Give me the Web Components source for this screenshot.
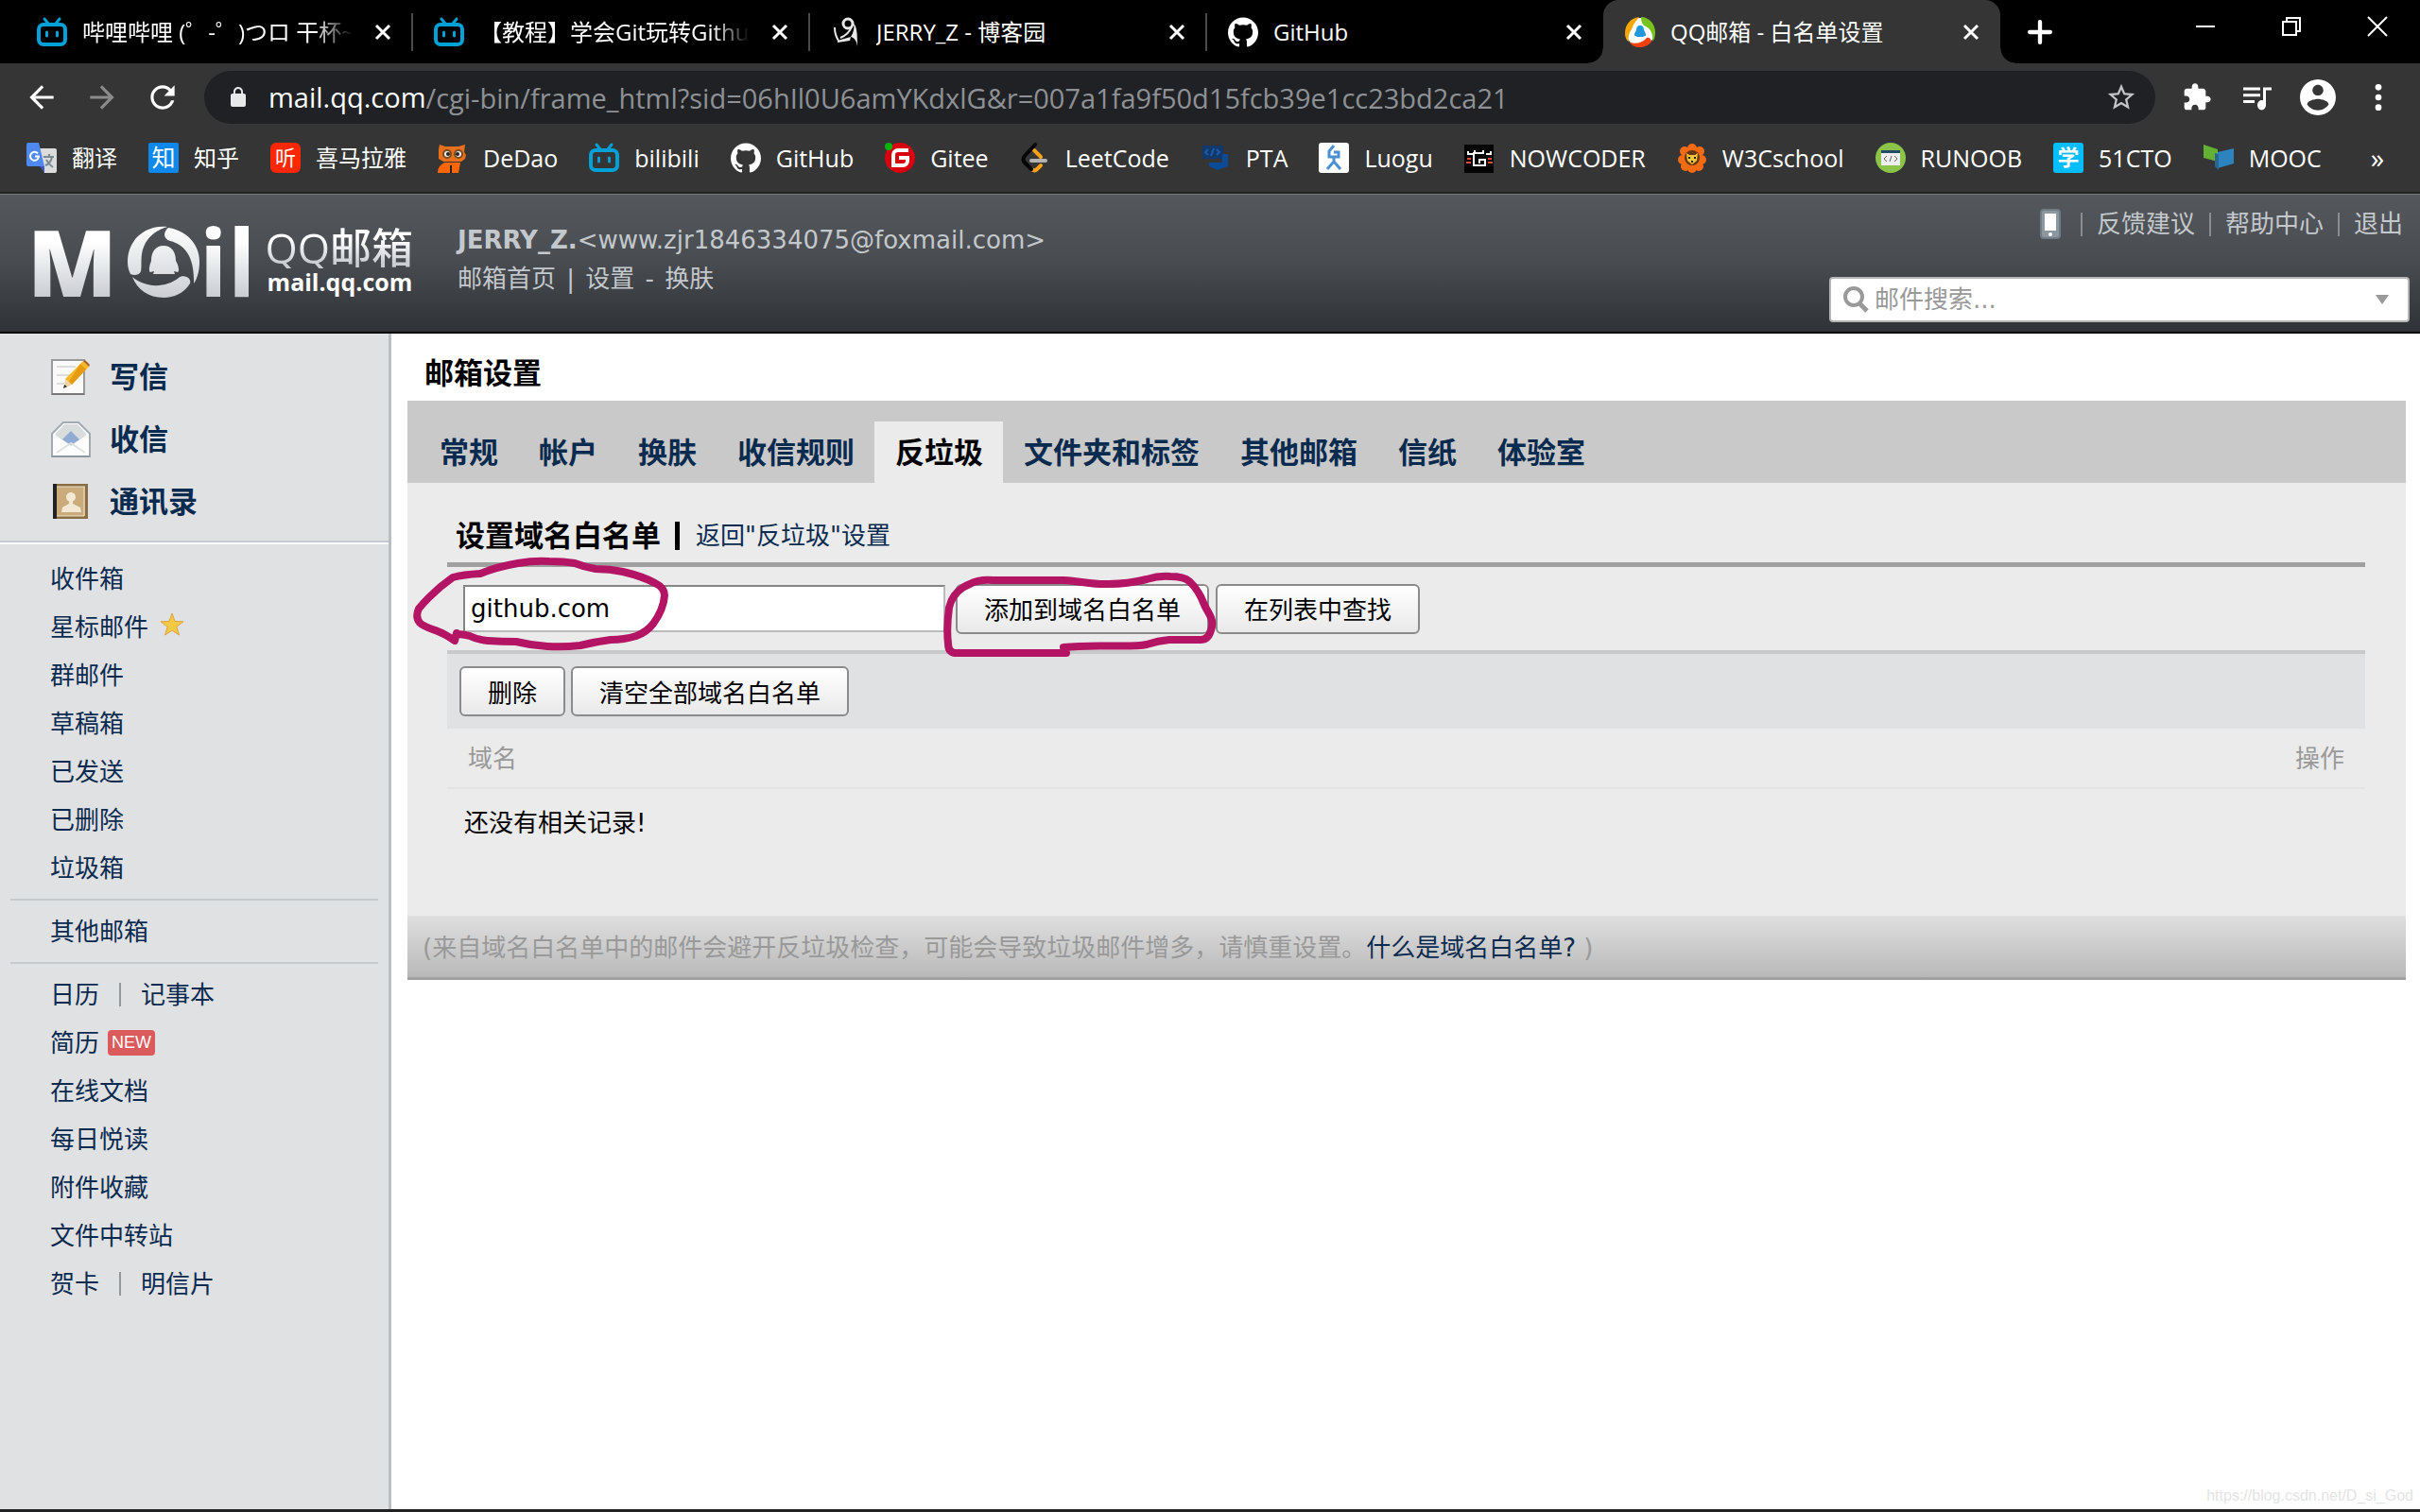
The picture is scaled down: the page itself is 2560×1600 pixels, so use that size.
<!DOCTYPE html>
<html lang="zh-CN">
<head>
<meta charset="utf-8">
<title>QQ邮箱 - 白名单设置</title>
<style>
  html, body { margin: 0; height: 100%; }
  body {
    font-family: "DejaVu Sans", "Noto Sans CJK SC", sans-serif;
    font-size: 26px;
    line-height: 32px;
    color: #000;
    background: #fff;
  }
</style>
</head>
<body>
<app-window></app-window>

<script>
// ---------- icons ----------
const CAT = 'M12 .297c-6.63 0-12 5.373-12 12 0 5.303 3.438 9.8 8.205 11.385.6.113.82-.258.82-.577 0-.285-.01-1.04-.015-2.04-3.338.724-4.042-1.61-4.042-1.61C4.422 18.07 3.633 17.7 3.633 17.7c-1.087-.744.084-.729.084-.729 1.205.084 1.838 1.236 1.838 1.236 1.07 1.835 2.809 1.305 3.495.998.108-.776.417-1.305.76-1.605-2.665-.3-5.466-1.332-5.466-5.93 0-1.31.465-2.38 1.235-3.22-.135-.303-.54-1.523.105-3.176 0 0 1.005-.322 3.3 1.23.96-.267 1.98-.399 3-.405 1.02.006 2.04.138 3 .405 2.28-1.552 3.285-1.23 3.285-1.23.645 1.653.24 2.873.12 3.176.765.84 1.23 1.91 1.23 3.22 0 4.61-2.805 5.625-5.475 5.92.42.36.81 1.096.81 2.22 0 1.606-.015 2.896-.015 3.286 0 .315.21.69.825.57C20.565 22.092 24 17.592 24 12.297c0-6.627-5.373-12-12-12';

// name: [viewBox, markup]
const ICONS = {
  bilibili: ['0 0 32 32', `<g fill="none" stroke="#00a1d6" stroke-linecap="round"><rect x="2" y="8" width="28" height="21" rx="5" stroke-width="4"/><path d="M8 2l4 5M24 2l-4 5" stroke-width="3"/><path d="M10.500 16v4M21.500 16v4" stroke-width="3"/></g>`],
  cnblogs: ['0 0 32 32', `<g fill="none" stroke="#e8e8e8"><circle cx="18" cy="7" r="5" stroke-width="3"/><path d="M4 11c0 7 2 11 4 14" stroke-width="2"/></g><path d="M7 25l14-4-1 4-13 2zM24 7c3 2 4 9 4 24-1-6-3-9-7-10 3-5 4-9 3-14z" fill="#e8e8e8"/><path d="M22 10c-2 6-5 9-12 12" fill="none" stroke="#e8e8e8" stroke-width="2"/>`],
  github: ['0 0 24 24', `<path fill="#fff" d="${CAT}"/>`],
  qqmail: ['0 0 32 32', `<circle cx="16" cy="16" r="15" fill="#fff"/><path d="M15 0C5 1 0 9 0 17c0 5 2 8 4 9-1-5 0-9 3-13C9 7 12 4 15 0z" fill="#f5a800"/><path d="M17 0c9 0 15 8 15 16 0 5-1 8-3 10 1-7-1-13-7-16-4-2-5-6-5-10z" fill="#79c21e"/><path d="M5 27c7 2 14 0 18-5 2-1 4 0 5 4-3 4-8 6-12 6-5 0-9-2-11-5z" fill="#f2400d"/><path d="M16 9c3 0 4 2 4 5 2 3 3 6 1 6l-2 1h-6l-2-1c-2 0-1-3 1-6 0-3 1-5 4-5z" fill="#2196dd"/>`],
  translate: ['0 0 32 32', `<path d="M14 6h16a2 2 0 0 1 2 2v22a2 2 0 0 1-2 2H19z" fill="#dcdcdc"/><path d="M2 0h11l6 25H2a2 2 0 0 1-2-2V2a2 2 0 0 1 2-2z" fill="#5089ee"/><path d="M14 25h5l0 7z" fill="#3a5bbd"/><path d="M12 11.500a4.500 4.500 0 1 0 1 3H9" fill="none" stroke="#fff" stroke-width="2"/><path d="M18 15h11M24 12v3M27 15c-1 5-4 8-7 9M21 18c2 4 4 6 7 8" stroke="#7b8b93" stroke-width="2" fill="none"/>`],
  zhihu: ['0 0 32 32', `<rect width="32" height="32" rx="2" fill="#0f88eb"/><text x="16" y="25" font-size="25" text-anchor="middle" fill="#fff">知</text>`],
  ximalaya: ['0 0 32 32', `<rect width="32" height="32" rx="6" fill="#fc2803"/><text x="16" y="24" font-size="22" text-anchor="middle" fill="#fff">听</text>`],
  dedao: ['0 0 32 32', `<path d="M2 2l6 2h14l7-2-1 8 2 3-1 4-4 3H6l-5-3V7z" fill="#e8701a"/><circle cx="10" cy="12" r="5" fill="#7a4a20"/><circle cx="22" cy="12" r="5" fill="#7a4a20"/><circle cx="10" cy="12" r="3" fill="#eee"/><circle cx="22" cy="12" r="3" fill="#eee"/><circle cx="11" cy="12" r="2" fill="#222"/><circle cx="21" cy="12" r="2" fill="#222"/><path d="M7 21h17l-2 11H0c0-5 2-8 7-11z" fill="#f60"/><path d="M14 24v8" stroke="#222" stroke-width="2"/>`],
  gitee: ['0 0 32 32', `<circle cx="16" cy="16" r="16" fill="#d8000f"/><path d="M25 8H14a5 5 0 0 0-5 5v11h10a5 5 0 0 0 5-5v-3h-9" fill="none" stroke="#fff" stroke-width="4"/><circle cx="4" cy="4" r="4" fill="#0ab30a"/>`],
  leetcode: ['0 0 32 32', `<g fill="none" stroke-width="4" stroke-linecap="round"><path d="M15 8l7 7M12 28q4 3 7-1l3-3" stroke="#ffa116"/><path d="M16 2L5 14q-3 4 0 7l7 7" stroke="#050505"/><path d="M12 19h15" stroke="#b3b3b3"/></g>`],
  pta: ['0 0 32 32', `<path d="M2 3h22v14H2z" fill="#12396b"/><path d="M8 7l-3 3 3 3M17 7l3 3-3 3M14 6l-3 8" stroke="#1d5ba8" stroke-width="2" fill="none"/><path d="M9 21h14V12h6v13l-11 4-9-4z" fill="#0b4a97"/>`],
  luogu: ['0 0 32 32', `<rect width="32" height="32" rx="3" fill="#fff"/><g fill="none" stroke="#4a90d2" stroke-width="3"><path d="M16 3l-5 6v6h10v-5h-5M16 15v5l-7 8M16 20l7 8"/></g>`],
  nowcoder: ['0 0 32 32', `<path d="M0 2h31v30H0z" fill="#050505"/><g fill="none" stroke="#fff" stroke-width="2"><path d="M4 9v3h5M28 9v3h-5M21 11H10v13h12v-6h-6v4M11 8v3M20 8v3"/></g><path d="M3 17h4M2 21h5M25 17h4M25 21h5" stroke="#e24d30" stroke-width="2"/>`],
  w3c: ['0 0 32 32', `<g fill="#f26b12"><circle cx="16" cy="6" r="5"/><circle cx="24" cy="9" r="5"/><circle cx="26" cy="18" r="5"/><circle cx="16" cy="27" r="5"/><circle cx="8" cy="9" r="5"/><circle cx="6" cy="18" r="5"/><circle cx="9" cy="25" r="5"/><circle cx="23" cy="25" r="5"/></g><circle cx="16" cy="16" r="8" fill="#6b3510"/><path d="M10 11l3 2h6l3-2-1 8-5 4-5-4z" fill="#efc63a"/><path d="M13 15v2M19 15v2M15 20h2" stroke="#222" stroke-width="2"/>`],
  runoob: ['0 0 32 32', `<circle cx="16" cy="16" r="16" fill="#8cc34b"/><path d="M6 8h20v16H6z" fill="#eee"/><path d="M6 8h20v3H6z" fill="#234a63"/><path d="M12 14l-3 3 3 3M20 14l3 3-3 3M17 14l-2 6" stroke="#666" stroke-width="1" fill="none"/>`],
  cto: ['0 0 32 32', `<rect width="32" height="32" rx="3" fill="#04bdfd"/><text x="16" y="24" font-size="23" font-weight="700" text-anchor="middle" fill="#fff">学</text>`],
  mooc: ['0 0 32 32', `<path d="M0 2l15 5v13L0 16z" fill="#62b132"/><path d="M15 10l17-4v16l-17 5z" fill="#2d83bd"/><path d="M12 11l4 1v17l-4-4z" fill="#2b6690"/>`],

  back: ['0 0 24 24', `<path fill="currentColor" d="M20 11H7.830l5.590-5.590L12 4l-8 8 8 8 1.410-1.410L7.830 13H20v-2z"/>`],
  forward: ['0 0 24 24', `<path fill="currentColor" d="M4 11h12.170l-5.590-5.590L12 4l8 8-8 8-1.410-1.410L16.170 13H4v-2z"/>`],
  reload: ['0 0 24 24', `<path fill="currentColor" d="M17.65 6.35C16.2 4.9 14.21 4 12 4c-4.42 0-7.99 3.58-7.99 8s3.57 8 7.99 8c3.73 0 6.84-2.55 7.73-6h-2.08c-.82 2.33-3.04 4-5.65 4-3.31 0-6-2.69-6-6s2.69-6 6-6c1.66 0 3.14.69 4.22 1.78L13 11h7V4l-2.35 2.35z"/>`],
  lock: ['0 0 24 24', `<path fill="currentColor" d="M18 8h-1V6c0-2.76-2.24-5-5-5S7 3.24 7 6v2H6c-1.1 0-2 .9-2 2v10c0 1.1.9 2 2 2h12c1.1 0 2-.9 2-2V10c0-1.1-.9-2-2-2zM8.900 6c0-1.710 1.390-3.100 3.100-3.100s3.100 1.390 3.100 3.100v2H8.900V6z"/>`],
  star: ['0 0 24 24', `<path fill="currentColor" d="M22 9.240l-7.190-.620L12 2 9.190 8.630 2 9.240l5.460 4.730L5.820 21 12 17.270 18.180 21l-1.630-7.030L22 9.240zM12 15.400l-3.760 2.270 1-4.280-3.320-2.880 4.380-.380L12 6.100l1.710 4.040 4.380.380-3.320 2.880 1 4.280L12 15.400z"/>`],
  puzzle: ['0 0 24 24', `<path fill="currentColor" d="M20.500 11H19V7c0-1.100-.900-2-2-2h-4V3.500C13 2.120 11.880 1 10.500 1S8 2.120 8 3.500V5H4c-1.100 0-1.990.900-1.990 2v3.800H3.500c1.490 0 2.700 1.210 2.700 2.700s-1.210 2.700-2.700 2.700H2V20c0 1.100.900 2 2 2h3.800v-1.500c0-1.490 1.210-2.700 2.700-2.700 1.490 0 2.700 1.210 2.700 2.700V22H17c1.100 0 2-.900 2-2v-4h1.500c1.380 0 2.500-1.120 2.500-2.500S21.880 11 20.500 11z"/>`],
  playlist: ['0 0 24 24', `<path fill="currentColor" d="M14 5H2v2h12V5zm0 4.500H2v2h12v-2zM2 16h8v-2H2v2zM16 5v9.180c-.310-.110-.650-.180-1-.180-1.660 0-3 1.600-3 3.400s1.340 3.600 3 3.600 3-1.600 3-3.600V7h4V5h-6z"/>`],
  account: ['2 2 20 20', `<path fill="currentColor" d="M12 2C6.480 2 2 6.480 2 12s4.480 10 10 10 10-4.480 10-10S17.520 2 12 2zm0 3c1.660 0 3 1.340 3 3s-1.340 3-3 3-3-1.340-3-3 1.340-3 3-3zm0 14.200c-2.500 0-4.710-1.280-6-3.220.030-1.990 4-3.080 6-3.080 1.990 0 5.970 1.090 6 3.080-1.290 1.940-3.500 3.220-6 3.220z"/>`],
  dots: ['0 0 24 24', `<g fill="currentColor"><circle cx="12" cy="4" r="2.500"/><circle cx="12" cy="12" r="2.500"/><circle cx="12" cy="20" r="2.500"/></g>`],
  close: ['0 0 20 20', `<path d="M3 3l14 14M17 3L3 17" stroke="currentColor" stroke-width="3" fill="none"/>`],
  plus: ['0 0 24 24', `<path d="M12 2v20M2 12h20" stroke="currentColor" stroke-width="4" stroke-linecap="round"/>`],
  minimize: ['0 0 20 20', `<path d="M0 10h20" stroke="currentColor" stroke-width="2"/>`],
  restore: ['0 0 20 20', `<path d="M1 5h14v14H1zM5 5V1h14v14h-4" stroke="currentColor" stroke-width="2" fill="none"/>`],
  shut: ['0 0 20 20', `<path d="M0 0l20 20M20 0L0 20" stroke="currentColor" stroke-width="2" fill="none"/>`],

  phone: ['0 0 22 32', `<rect x="1" y="1" width="20" height="30" rx="3" fill="#8d979f" stroke="#6f7c86" stroke-width="2"/><path d="M5 5h12v18H5z" fill="#fff"/><circle cx="11" cy="27" r="2" fill="#fff"/>`],
  search: ['0 0 28 28', `<circle cx="12" cy="11" r="9" fill="none" stroke="#999" stroke-width="4"/><path d="M18 18l8 8" stroke="#999" stroke-width="5"/>`],
  compose: ['0 0 42 40', `<path d="M1 2h34v36H1z" fill="#fafafa" stroke="#9a9a9a" stroke-width="2"/><path d="M6 9h20M6 18h16M6 27h8" stroke="#ddd" stroke-width="2"/><path d="M1 38h34" stroke="#777" stroke-width="2"/><path d="M34 3l6 6-18 19-7-6z" fill="#f7b824"/><path d="M31 6l6 6-15 16-3-3z" fill="#e59a12"/><path d="M34 3l2-1 5 5-1 2z" fill="#a95f22"/><path d="M15 22l7 6-8 4z" fill="#ecd2a4"/><path d="M14 28l3 2-4 2z" fill="#333"/>`],
  inbox: ['0 0 42 40', `<path d="M1 14L13 2h16l12 12v24H1z" fill="#fdfdfd" stroke="#a3abb1" stroke-width="2"/><path d="M4 15L14 4h14l10 11-17 12z" fill="#d9dcdc"/><path d="M21 11l9 9-9 6-9-6z" fill="#8fabd4"/><path d="M6 34l15-10 15 10" fill="none" stroke="#dde1e4" stroke-width="2"/><path d="M1 38h40" stroke="#8d98a0" stroke-width="2"/>`],
  contacts: ['0 0 42 40', `<path d="M2 1h37v37H2z" fill="#8b6d43"/><path d="M6 4h30v31H6z" fill="#c9ab7c"/><path d="M2 1h4v37H2z" fill="#222"/><path d="M6 4h30M35 4v31H6" stroke="#efe2c6" stroke-width="1" fill="none"/><circle cx="21" cy="15" r="5" fill="#f3e9d2"/><path d="M19 18h4v4l8 4 1 5H11l1-5 7-4z" fill="#f3e9d2"/>`],
  goldstar: ['0 0 26 26', `<path d="M13 1l3 8.500 9 .300-7.200 5.500L20.500 24 13 19l-7.500 5 2.700-8.700L1 9.800l9-.300z" fill="#f6c945" stroke="#e0a13c" stroke-width="1"/>`],
  ring: ['0 0 76 76', `<defs><linearGradient id="g" gradientUnits="userSpaceOnUse" x1="0" y1="0" x2="0" y2="76"><stop offset="0" stop-color="#fff"/><stop offset="1" stop-color="#cbced3"/></linearGradient></defs><g fill="url(#g)"><path d="M42 1C18-1 0 15 0 38c0 5 1 9 3 13 4 2 10 1 11-3 1-5 0-11 1-18C17 15 28 5 42 1z"/><path d="M43 2c20 3 33 18 33 36 0 9-2 17-6 23C71 35 62 20 45 16c-7-2-8-9-2-14z"/><path d="M5 54c14 12 35 12 49 1 4-4 14-1 12 6C60 71 49 76 38 76 22 76 10 67 5 54z"/><path d="M38 21c8 0 13 6 13 16 3 5 4 11 2 12l-4-1 1 3H27l1-3-4 1c-2-1-1-7 1-12 0-10 5-16 13-16z"/></g>`],
};

// Base: attaches an open root and clones the element's template
class Base extends HTMLElement {
  constructor() {
    super();
    const template = document.createElement('template');
    template.innerHTML = this.render();
    this.attachShadow({ mode: 'open' }).appendChild(template.content.cloneNode(true));
  }
  render() { return '<slot></slot>'; }
}

// <app-icon name="" size="">
class AppIcon extends HTMLElement {
  constructor() {
    super();
    this.attachShadow({ mode: 'open' });
  }
  connectedCallback() {
    const [box, body] = ICONS[this.getAttribute('name')];
    const [, , w, h] = box.split(' ').map(Number);
    const size = Number(this.getAttribute('size') || 32);
    this.shadowRoot.innerHTML = /* html */ `
      <style>
        :host { display: inline-flex; flex: none; }
        svg { display: block; overflow: visible; font-family: "Noto Sans CJK SC", sans-serif; }
      </style>
      <svg width="${size}" height="${Math.round(size * h / w)}" viewBox="${box}" aria-hidden="true">${body}</svg>`;
  }
}

// ---------- browser chrome ----------
class BrowserTab extends Base {
  render() {
    return /* html */ `
    <style>
      :host { display: flex; flex: 0 1 420px; min-width: 0; height: 67px; box-sizing: border-box; align-items: center; gap: 16px; padding: 0 15px 0 23px; position: relative; }
      :host([divided])::after { content: ""; position: absolute; right: -1px; top: 14px; width: 2px; height: 40px; background: #4a4a4a; }
      :host([active]) { background: #353535; border-radius: 16px 16px 0 0; }
      :host([active])::before, :host([active])::after { content: ""; position: absolute; bottom: 0; width: 16px; height: 16px; }
      :host([active])::before { left: -16px; background: radial-gradient(circle at 0 0, #000 15px, #353535 16px); }
      :host([active])::after { right: -16px; background: radial-gradient(circle at 100% 0, #000 15px, #353535 16px); }
      .title { flex: 1; min-width: 0; overflow: hidden; white-space: nowrap; margin-right: -6px; }
      .title.fade { -webkit-mask-image: linear-gradient(90deg, #000 calc(100% - 46px), transparent calc(100% - 6px)); mask-image: linear-gradient(90deg, #000 calc(100% - 46px), transparent calc(100% - 6px)); }
      button { display: flex; justify-content: center; width: 32px; padding: 6px 0; margin: 0; border: 0; background: none; color: #fff; }
    </style>
    <slot name="icon"></slot>
    <div class="title${this.hasAttribute('long') ? ' fade' : ''}"><slot></slot></div>
    <button aria-label="关闭标签页"><app-icon name="close" size="20"></app-icon></button>`;
  }
}

class TabStrip extends Base {
  render() {
    return /* html */ `
    <style>
      :host { display: flex; height: 67px; background: #000; color: #fff; padding-left: 16px; }
      button { display: flex; align-items: center; justify-content: center; padding: 0; border: 0; background: none; color: #fff; }
      .new { width: 32px; margin: 0 auto 0 26px; }
      .win { width: 91px; height: 56px; }
    </style>
    <slot></slot>
    <button class="new" aria-label="新标签页"><app-icon name="plus" size="26"></app-icon></button>
    <button class="win" aria-label="最小化"><app-icon name="minimize" size="20"></app-icon></button>
    <button class="win" aria-label="还原"><app-icon name="restore" size="20"></app-icon></button>
    <button class="win" aria-label="关闭"><app-icon name="shut" size="20"></app-icon></button>`;
  }
}

class AddressBar extends Base {
  render() {
    return /* html */ `
    <style>
      :host { display: flex; align-items: center; padding: 8px 12px; color: #fff; }
      button { display: flex; align-items: center; justify-content: center; width: 64px; height: 56px; padding: 0; border: 0; background: none; color: #fff; }
      .off { color: #8b8b8b; }
      .box { flex: 1; display: flex; align-items: center; height: 56px; margin: 0 12px; padding-left: 24px; border-radius: 28px; background: #202124; font-size: 29px; }
      .box app-icon { margin-right: 20px; color: #e8e8e8; }
      input { flex: 1; min-width: 0; height: 48px; padding: 0; border: 0; outline: 0; background: none; font: inherit; color: #8d9195; }
      .box button { color: #c4c4c4; width: 72px; }
      .box button app-icon { margin: 0; color: inherit; }
    </style>
    <button aria-label="后退"><app-icon name="back" size="38"></app-icon></button>
    <button class="off" aria-label="前进"><app-icon name="forward" size="38"></app-icon></button>
    <button aria-label="重新加载"><app-icon name="reload" size="38"></app-icon></button>
    <div class="box">
      <app-icon name="lock" size="24"></app-icon>
      <span>mail.qq.com</span>
      <input aria-label="地址" value="/cgi-bin/frame_html?sid=06hIl0U6amYKdxlG&amp;r=007a1fa9f50d15fcb39e1cc23bd2ca21">
      <button aria-label="收藏"><app-icon name="star" size="34"></app-icon></button>
    </div>
    <button aria-label="扩展程序"><app-icon name="puzzle" size="32"></app-icon></button>
    <button aria-label="媒体"><app-icon name="playlist" size="36"></app-icon></button>
    <button aria-label="用户"><app-icon name="account" size="38"></app-icon></button>
    <button aria-label="菜单"><app-icon name="dots" size="32"></app-icon></button>`;
  }
}

class BookmarkItem extends Base {
  render() {
    return /* html */ `
    <style>
      :host { display: block; }
      :host([lang=en]) { font-size: 25px; }
      a { display: flex; align-items: center; gap: 16px; color: #fff; text-decoration: none; white-space: nowrap; }
    </style>
    <a href="#"><app-icon name="${this.getAttribute('icon')}"></app-icon><span><slot></slot></span></a>`;
  }
}

class BookmarkBar extends Base {
  render() {
    return /* html */ `
    <style>
      :host { display: flex; align-items: center; gap: 33px; height: 56px; padding: 0 38px 8px 28px; border-bottom: 2px solid #222; }
      button { margin-left: auto; padding: 0; border: 0; background: none; color: #fff; font: inherit; font-size: 29px; }
    </style>
    <slot></slot>
    <button aria-label="更多书签">»</button>`;
  }
}

// ---------- mail page ----------
class MailHeader extends Base {
  render() {
    return /* html */ `
    <style>
      :host { display: flex; align-items: stretch; height: 148px; box-sizing: border-box; padding: 0 11px 0 29px; background: linear-gradient(#54575c, #4a4d51 45%, #2f3337); border-top: 1px solid #777a7e; border-bottom: 2px solid #000; color: #c3c8cc; }
      a { color: inherit; text-decoration: none; }
      .logo { display: flex; align-items: center; flex: none; width: 455px; padding-bottom: 6px; box-sizing: border-box; }
      .big { font: 800 98px/104px "Open Sans", sans-serif; }
      .il { font-weight: 700; }
      .big, .name { background: linear-gradient(#fff 30%, #cbced3 85%); -webkit-background-clip: text; background-clip: text; color: transparent; }
      .logo app-icon { margin-left: 11px; padding-top: 3px; }
      .words { display: flex; flex-direction: column; margin-left: 10px; font-family: "Open Sans", "Noto Sans CJK SC", sans-serif; white-space: nowrap; }
      .name { font-size: 44px; line-height: 44px; }
      .name b { font-weight: 500; }
      .site { font-size: 25px; line-height: 28px; font-weight: 700; color: #fff; padding-left: 2px; }
      .who { flex: 1; padding-top: 28px; line-height: 41px; white-space: nowrap; }
      .who i { font-style: normal; margin: 0 3px; }
      .side { display: flex; flex-direction: column; align-items: flex-end; justify-content: space-between; padding: 15px 0 10px; width: 614px; }
      nav { display: flex; align-items: center; gap: 15px; padding-right: 7px; }
      nav i { width: 2px; height: 25px; background: #8b8e90; }
      nav app-icon { margin-right: 6px; }
      .find { display: flex; align-items: center; width: 100%; height: 48px; box-sizing: border-box; border: 2px solid #b5b5b5; border-radius: 4px; background: #fff; padding: 0 20px 0 12px; }
      input { flex: 1; min-width: 0; border: 0; outline: 0; padding: 0 6px; font: inherit; background: none; }
      input::placeholder { color: #999; opacity: 1; }
      .find button { padding: 0; width: 14px; height: 10px; border: 0; background: #999; clip-path: polygon(0 0, 100% 0, 50% 100%); }
    </style>
    <a class="logo" href="#">
      <span class="big">M</span><app-icon name="ring" size="76"></app-icon><span class="big il">il</span>
      <span class="words"><span class="name">QQ<b>邮箱</b></span><span class="site">mail.qq.com</span></span>
    </a>
    <div class="who">
      <div><b>JERRY_Z.</b>&lt;www.zjr1846334075@foxmail.com&gt;</div>
      <div><a href="#">邮箱首页</a> <i>|</i> <a href="#">设置</a> <i>-</i> <a href="#">换肤</a></div>
    </div>
    <div class="side">
      <nav><app-icon name="phone" size="22"></app-icon><i></i><a href="#">反馈建议</a><i></i><a href="#">帮助中心</a><i></i><a href="#">退出</a></nav>
      <div class="find"><app-icon name="search" size="28"></app-icon><input aria-label="邮件搜索" placeholder="邮件搜索..."><button aria-label="搜索选项"></button></div>
    </div>`;
  }
}

class SideNav extends Base {
  render() {
    return /* html */ `
    <style>
      :host { display: block; flex: none; width: 411px; background: #e0e1e3; border-right: 3px solid #b9bdc4; }
      a { color: #0a2b50; text-decoration: none; }
      .main { padding: 13px 0 8px 54px; border-bottom: 2px solid #c5c9d0; box-shadow: 0 2px #fff; font-size: 31px; font-weight: 700; }
      .main a { display: flex; align-items: center; gap: 20px; height: 66px; }
      .list { padding: 0 0 0 53px; }
      .list > div { display: flex; align-items: center; height: 51px; }
      hr { height: 2px; margin: 7px 11px; border: 0; background: #c6cbd0; }
      .first { padding-top: 13px; }
      i { width: 2px; height: 25px; margin: 0 21px; background: #94979a; }
      .new { margin-left: 9px; padding: 0 4px; border-radius: 4px; background: #db5a5b; color: #fff; font: 18px/27px "Liberation Sans", sans-serif; }
      app-icon[name=goldstar] { margin: 0 0 6px 12px; }
    </style>
    <div class="main">
      <a href="#"><app-icon name="compose" size="42"></app-icon>写信</a>
      <a href="#"><app-icon name="inbox" size="42"></app-icon>收信</a>
      <a href="#"><app-icon name="contacts" size="42"></app-icon>通讯录</a>
    </div>
    <div class="list first">
      <div><a href="#">收件箱</a></div>
      <div><a href="#">星标邮件</a><app-icon name="goldstar" size="26"></app-icon></div>
      <div><a href="#">群邮件</a></div>
      <div><a href="#">草稿箱</a></div>
      <div><a href="#">已发送</a></div>
      <div><a href="#">已删除</a></div>
      <div><a href="#">垃圾箱</a></div>
    </div>
    <hr>
    <div class="list"><div><a href="#">其他邮箱</a></div></div>
    <hr>
    <div class="list">
      <div><a href="#">日历</a><i></i><a href="#">记事本</a></div>
      <div><a href="#">简历</a><span class="new">NEW</span></div>
      <div><a href="#">在线文档</a></div>
      <div><a href="#">每日悦读</a></div>
      <div><a href="#">附件收藏</a></div>
      <div><a href="#">文件中转站</a></div>
      <div><a href="#">贺卡</a><i></i><a href="#">明信片</a></div>
    </div>`;
  }
}

class SettingsTabs extends Base {
  render() {
    const tabs = ['常规', '帐户', '换肤', '收信规则', '反垃圾', '文件夹和标签', '其他邮箱', '信纸', '体验室'];
    return /* html */ `
    <style>
      :host { display: flex; padding: 22px 12px 0; background: #c9c9c9; font-size: 31px; font-weight: 700; }
      a { padding: 0 21px 0 22px; height: 65px; line-height: 67px; color: #0a2b50; text-decoration: none; }
      a.on { background: #ebebeb; color: #000; }
    </style>
    ${tabs.map(t => `<a href="#"${t === '反垃圾' ? ' class="on"' : ''}>${t}</a>`).join('')}`;
  }
}

class SoftButton extends Base {
  render() {
    return /* html */ `
    <style>
      :host { display: inline-block; }
      button { height: 53px; padding: 4px 28px 0; border: 2px solid #8b8b8b; border-radius: 6px; background: linear-gradient(#fff, #e9e9e9); color: #000; font: inherit; white-space: nowrap; }
    </style>
    <button><slot></slot></button>`;
  }
}

class DomainForm extends Base {
  render() {
    return /* html */ `
    <style>
      :host { display: flex; align-items: center; position: relative; padding: 16px 17px; height: 56px; }
      input { width: 510px; height: 50px; box-sizing: border-box; margin-right: 11px; padding: 0 6px; border: 2px solid #bbb; border-top-color: #858585; border-left-color: #858585; background: #fff; font: inherit; color: #000; }
      soft-button + soft-button { margin-left: 7px; }
      /* hand-drawn marks over the field and the add button */
      svg { position: absolute; left: -43px; top: -20px; pointer-events: none; }
    </style>
    <input aria-label="域名" value="github.com">
    <soft-button>添加到域名白名单</soft-button>
    <soft-button>在列表中查找</soft-button>
    <svg width="880" height="130" viewBox="430 580 880 130" fill="none" stroke="#b31463" stroke-width="8" stroke-linejoin="round" stroke-linecap="round" aria-hidden="true">
      <path d="M483 670L481 678Q471 671 463 668C455 665 448 663 444 659Q439 653 443 644Q448 638 454 632Q466 620 479 611Q490 608 508 607Q525 600 548 596Q565 593 581 594Q596 594 608 596Q618 600 630 602Q645 602 659 605Q680 610 693 617Q703 622 703 630Q702 645 691 660Q684 669 673 673Q660 677 646 677Q630 679 614 683Q597 685 579 684Q562 683 546 679Q530 679 516 678Q505 677 497 673Q490 671 483 671"/>
      <path d="M1128 691H1010Q1003 690 1003 681Q1001 665 1004 643Q1008 625 1026 618Q1035 613 1050 614H1125C1145 615 1155 619 1173 618Q1193 618 1213 613Q1226 609 1238 610Q1252 610 1258 615Q1268 624 1274 640C1279 651 1285 655 1281 667Q1278 678 1268 677H1237Q1225 678 1213 682C1195 686 1160 681 1125 685"/>
    </svg>`;
  }
}

class DomainList extends Base {
  render() {
    return /* html */ `
    <style>
      :host { display: block; border-top: 4px solid #c9c9c9; }
      .tools { display: flex; gap: 6px; padding: 13px; background: #e0e1e3; }
      table { width: 100%; border-collapse: collapse; }
      th { padding: 16px 22px 14px; color: #999; font-weight: 400; text-align: left; border-bottom: 2px solid #e3e3e3; }
      th:last-child { text-align: right; }
      td { padding: 20px 18px 82px; }
    </style>
    <div class="tools"><soft-button>删除</soft-button><soft-button>清空全部域名白名单</soft-button></div>
    <table>
      <thead><tr><th>域名</th><th>操作</th></tr></thead>
      <tbody><tr><td colspan="2">还没有相关记录!</td></tr></tbody>
    </table>`;
  }
}

class SettingsPage extends Base {
  render() {
    return /* html */ `
    <style>
      :host { display: block; flex: 1; min-width: 0; padding: 0 15px 0 17px; }
      h1 { margin: 0; padding: 22px 18px 9px; font-size: 31px; line-height: 40px; }
      .panel { background: #ebebeb; padding: 37px 43px 0 42px; }
      h2 { display: flex; align-items: center; margin: 0; padding: 0 9px 9px; font-size: 31px; line-height: 38px; border-bottom: 5px solid #a0a0a0; }
      h2 i { width: 5px; height: 30px; margin: 0 17px 0 15px; background: #000; }
      h2 a { font-size: 26px; font-weight: 400; }
      a { color: #0a2b50; text-decoration: none; }
      footer { padding: 18px 16px 15px; color: #999; background: linear-gradient(#dfdfdf, #b9b9b9); border-bottom: 3px solid #a0a0a0; }
    </style>
    <h1>邮箱设置</h1>
    <settings-tabs></settings-tabs>
    <div class="panel">
      <h2>设置域名白名单<i></i><a href="#">返回"反垃圾"设置</a></h2>
      <domain-form></domain-form>
      <domain-list></domain-list>
    </div>
    <footer>(来自域名白名单中的邮件会避开反垃圾检查，可能会导致垃圾邮件增多，请慎重设置。<a href="#">什么是域名白名单?</a> )</footer>`;
  }
}

class AppWindow extends Base {
  render() {
    return /* html */ `
    <style>
      :host { display: flex; flex-direction: column; min-height: 100vh; box-sizing: border-box; border-bottom: 3px solid #212121; position: relative; }
      .chrome { background: #353535; font-family: "Open Sans", "Noto Sans CJK SC", sans-serif; font-size: 24px; }
      .body { display: flex; flex: 1; }
      .mark { position: absolute; right: 7px; bottom: 4px; font: 16px/20px "Liberation Sans", sans-serif; color: #e4e4e4; }
    </style>
    <div class="chrome">
      <tab-strip>
        <browser-tab divided long><app-icon slot="icon" name="bilibili"></app-icon>哔哩哔哩 (゜-゜)つロ 干杯~-bilibili</browser-tab>
        <browser-tab divided long><app-icon slot="icon" name="bilibili"></app-icon>【教程】学会Git玩转Github</browser-tab>
        <browser-tab divided><app-icon slot="icon" name="cnblogs"></app-icon>JERRY_Z - 博客园</browser-tab>
        <browser-tab><app-icon slot="icon" name="github"></app-icon>GitHub</browser-tab>
        <browser-tab active><app-icon slot="icon" name="qqmail"></app-icon>QQ邮箱 - 白名单设置</browser-tab>
      </tab-strip>
      <address-bar></address-bar>
      <bookmark-bar>
        <bookmark-item icon="translate">翻译</bookmark-item>
        <bookmark-item icon="zhihu">知乎</bookmark-item>
        <bookmark-item icon="ximalaya">喜马拉雅</bookmark-item>
        <bookmark-item lang="en" icon="dedao">DeDao</bookmark-item>
        <bookmark-item lang="en" icon="bilibili">bilibili</bookmark-item>
        <bookmark-item lang="en" icon="github">GitHub</bookmark-item>
        <bookmark-item lang="en" icon="gitee">Gitee</bookmark-item>
        <bookmark-item lang="en" icon="leetcode">LeetCode</bookmark-item>
        <bookmark-item lang="en" icon="pta">PTA</bookmark-item>
        <bookmark-item lang="en" icon="luogu">Luogu</bookmark-item>
        <bookmark-item lang="en" icon="nowcoder">NOWCODER</bookmark-item>
        <bookmark-item lang="en" icon="w3c">W3Cschool</bookmark-item>
        <bookmark-item lang="en" icon="runoob">RUNOOB</bookmark-item>
        <bookmark-item lang="en" icon="cto">51CTO</bookmark-item>
        <bookmark-item lang="en" icon="mooc">MOOC</bookmark-item>
      </bookmark-bar>
    </div>
    <mail-header></mail-header>
    <div class="body">
      <side-nav></side-nav>
      <settings-page></settings-page>
    </div>
    <span class="mark">https://blog.csdn.net/D_si_God</span>`;
  }
}

customElements.define('app-icon', AppIcon);
customElements.define('browser-tab', BrowserTab);
customElements.define('tab-strip', TabStrip);
customElements.define('address-bar', AddressBar);
customElements.define('bookmark-item', BookmarkItem);
customElements.define('bookmark-bar', BookmarkBar);
customElements.define('mail-header', MailHeader);
customElements.define('side-nav', SideNav);
customElements.define('settings-tabs', SettingsTabs);
customElements.define('soft-button', SoftButton);
customElements.define('domain-form', DomainForm);
customElements.define('domain-list', DomainList);
customElements.define('settings-page', SettingsPage);
customElements.define('app-window', AppWindow);
</script>
</body>
</html>
